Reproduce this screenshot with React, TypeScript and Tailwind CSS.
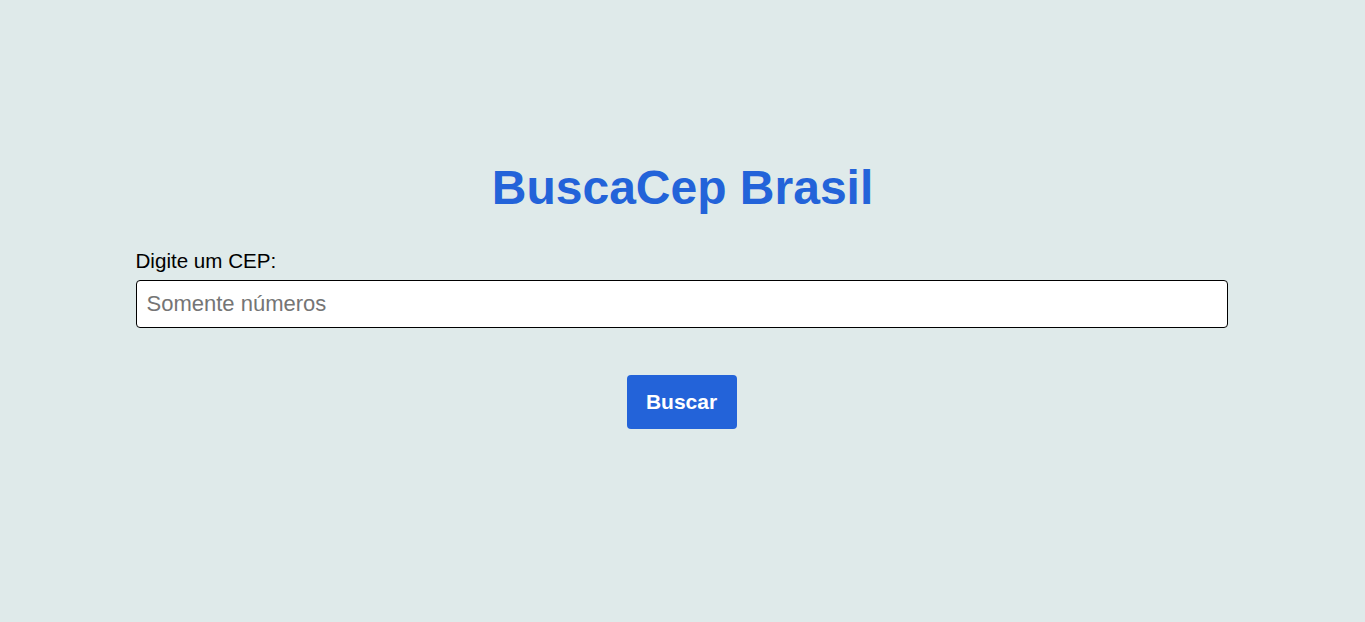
export default function App() {
  return (
    <div className="min-h-[622px] w-full bg-[#dfeaea] flex flex-col items-center pt-[156px]" style={{ fontFamily: '"Liberation Sans", Arial, sans-serif' }}>
      <h1 className="text-[48px] font-bold text-[#2363d9] leading-[64px]">BuscaCep Brasil</h1>
      <div className="w-[1092px] mt-[29px] flex flex-col -translate-x-[1px]">
        <label className="text-[20.6px] leading-[24px] text-black">Digite um CEP:</label>
        <input
          type="text"
          placeholder="Somente números"
          className="mt-[7px] h-[48px] w-full rounded-[4px] border border-black bg-white px-[10px] text-[22px] text-black placeholder:text-[#757575] outline-none"
        />
      </div>
      <button className="mt-[47px] h-[54px] w-[110px] rounded-[4px] bg-[#2363d9] text-[21px] font-bold text-white -translate-x-[1px]">Buscar</button>
    </div>
  );
}
